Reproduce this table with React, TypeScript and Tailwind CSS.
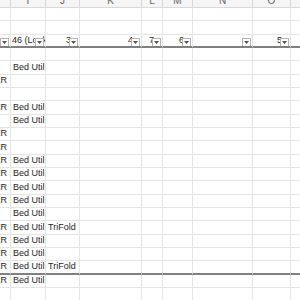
import React from 'react'

// column widths (px) incl. right gridline: H is cut at the left edge, P runs off the right edge
const cols = [
  { key: 'H', w: 11 },
  { key: 'I', w: 35 },
  { key: 'J', w: 34 },
  { key: 'K', w: 62 },
  { key: 'L', w: 21 },
  { key: 'M', w: 30 },
  { key: 'N', w: 60 },
  { key: 'O', w: 38 },
  { key: 'P', w: 40 },
]

type Row = { h: number; H?: string; I?: string; J?: string; thick?: boolean }

const rows: Row[] = [
  { h: 13 },
  { h: 14, I: 'Bed Util' },
  { h: 13, H: 'ER' },
  { h: 13 },
  { h: 14, H: 'ER', I: 'Bed Util' },
  { h: 13, I: 'Bed Util' },
  { h: 13, H: 'ER' },
  { h: 14, H: 'ER' },
  { h: 13, H: 'ER', I: 'Bed Util' },
  { h: 13, H: 'ER', I: 'Bed Util' },
  { h: 14, H: 'ER', I: 'Bed Util' },
  { h: 13, H: 'ER', I: 'Bed Util' },
  { h: 13, I: 'Bed Util' },
  { h: 14, H: 'ER', I: 'Bed Util', J: 'TriFold' },
  { h: 13, H: 'ER', I: 'Bed Util' },
  { h: 13, H: 'ER', I: 'Bed Util' },
  { h: 14, H: 'ER', I: 'Bed Util', J: 'TriFold', thick: true },
  { h: 13, H: 'ER', I: 'Bed Util' },
  { h: 13 },
]

// filter row: label text and whether the cell has a dropdown
const filters: Record<string, { text?: string; num?: string; btn: boolean }> = {
  H: { btn: true },
  I: { text: '46 (Lookup)', btn: true },
  J: { num: '3', btn: true },
  K: { num: '4', btn: true },
  L: { num: '7', btn: true },
  M: { num: '6', btn: true },
  N: { btn: true },
  O: { num: '5', btn: true },
  P: { btn: false },
}

function FilterButton() {
  return (
    <div className="absolute right-[1px] top-[3px] flex h-[9px] w-[9px] items-center justify-center border border-[#b4b4b4] bg-white">
      <svg width="5" height="3" viewBox="0 0 5 3">
        <path d="M0 0h5L2.5 3z" fill="#555" />
      </svg>
    </div>
  )
}

export default function App() {
  return (
    <div className="h-[300px] w-[300px] overflow-hidden bg-white text-[#262626]" style={{ fontFamily: '"Liberation Sans", Arial, sans-serif' }}>
      {/* column letters */}
      <div className="flex h-[8px] bg-[#f5f5f5]">
        {cols.map((c) => (
          <div key={c.key} style={{ width: c.w }} className="flex shrink-0 items-end justify-center overflow-hidden border-r border-b border-[#d9d9d9]">
            <span className="mb-[1px] text-[10px] leading-none text-[#666]">{c.key === 'H' ? '' : c.key}</span>
          </div>
        ))}
      </div>

      {[13, 14].map((h, i) => (
        <div key={i} className="flex" style={{ height: h }}>
          {cols.map((c) => (
            <div key={c.key} style={{ width: c.w }} className="shrink-0 border-r border-b border-[#e5e5e5]" />
          ))}
        </div>
      ))}

      {/* autofilter header row */}
      <div className="flex h-[13px]">
        {cols.map((c) => {
          const f = filters[c.key]
          return (
            <div key={c.key} style={{ width: c.w }} className="relative flex shrink-0 items-end overflow-hidden border-r border-b-2 border-r-[#e5e5e5] border-b-[#808080]">
              {f.text && <span className="mb-[1px] ml-[1px] whitespace-nowrap text-[9px] leading-none">{f.text}</span>}
              {f.num && <span className="absolute bottom-[1px] right-[8px] text-[9px] leading-none">{f.num}</span>}
              {f.btn && <FilterButton />}
            </div>
          )
        })}
      </div>

      {rows.map((r, i) => (
        <div key={i} className="flex" style={{ height: r.h }}>
          {cols.map((c) => {
            const val = c.key === 'H' ? r.H : c.key === 'I' ? r.I : c.key === 'J' ? r.J : undefined
            return (
              <div
                key={c.key}
                style={{ width: c.w }}
                className={`flex shrink-0 items-end overflow-hidden border-r border-r-[#e5e5e5] ${r.thick ? 'border-b-2 border-b-[#808080]' : 'border-b border-b-[#e5e5e5]'} ${c.key === 'H' ? 'justify-end pr-[3px]' : 'pl-[2px]'}`}
              >
                {val && <span className="mb-[2px] whitespace-nowrap text-[9px] leading-none">{val}</span>}
              </div>
            )
          })}
        </div>
      ))}
    </div>
  )
}
